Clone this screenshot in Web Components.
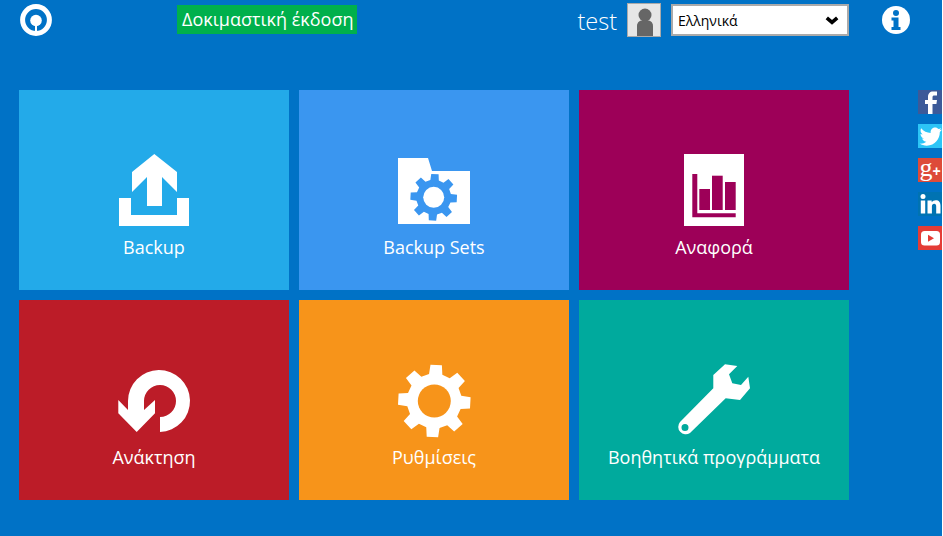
<!DOCTYPE html>
<html lang="el">
<head>
<meta charset="utf-8">
<title>Backup</title>
<style>
  html { background: #fff; }
  body { margin: 0; font-family: "Open Sans", "Liberation Sans", sans-serif; }
</style>
</head>
<body>
<app-shell>
  <app-header slot="header" user="test" badge="Δοκιμαστική έκδοση" language="Ελληνικά"></app-header>

  <tile-grid slot="tiles">
    <app-tile color="#23aae9">
      <svg slot="icon" viewBox="0 0 80 80" fill="#fff">
        <path d="M40.3 4 63 22V42L48 27V56H33V27L18 42V22Z"/>
        <path d="M5 48H17V65H63V48H75V76H5Z"/>
      </svg>
      Backup
    </app-tile>

    <app-tile color="#3a96f0">
      <cog-icon slot="icon" folder cx="39.7" cy="47.3" outer="23.5" root="17.5" hole="10.5" fill="#3a96f0" hole-fill="#fff"></cog-icon>
      Backup Sets
    </app-tile>

    <app-tile color="#9d0058">
      <svg slot="icon" viewBox="0 0 80 80">
        <rect x="10" y="4" width="60" height="72" fill="#fff"/>
        <path fill="#9d0058" d="M18.3 24H23.3V63.3H61.7V67.3H18.3Z"/>
        <rect x="25.3" y="39" width="10.7" height="21" fill="#9d0058"/>
        <rect x="38" y="25.7" width="10.7" height="34.3" fill="#9d0058"/>
        <rect x="51" y="32" width="10.7" height="28" fill="#9d0058"/>
      </svg>
      Αναφορά
    </app-tile>

    <app-tile color="#bc1c28">
      <svg slot="icon" viewBox="0 0 80 80" fill="#fff">
        <path d="M46 72A31 31 0 1 0 14 41V50L4.3 40V53.3L22.7 72 41 53.3V40L30 50V41A16 16 0 1 1 46 57Z"/>
      </svg>
      Ανάκτηση
    </app-tile>

    <app-tile color="#f7941a">
      <cog-icon slot="icon" cx="40.3" cy="41" outer="36.5" root="27.5" hole="16.5" fill="#fff" hole-fill="#f7941a"></cog-icon>
      Ρυθμίσεις
    </app-tile>

    <app-tile color="#00aa9d">
      <svg slot="icon" viewBox="0 0 80 80" fill="#fff">
        <path fill-rule="evenodd" d="M51 4.3 63.3 6 55 14.3 58.3 23.3 67 25 74.3 16.7 76 28.3 66 40 51.7 38.3 16 73A7.500 7.500 0 0 1 6 62L39.3 28.3V15ZM11 64A3.500 3.500 0 1 0 11 71 3.500 3.500 0 1 0 11 64Z"/>
      </svg>
      Βοηθητικά προγράμματα
    </app-tile>
  </tile-grid>

  <social-bar slot="social"></social-bar>
</app-shell>

<script>
class AppShell extends HTMLElement {
  constructor() {
    super();
    this.shadowDOM = this.attachShadow({ mode: "open" });
    this.shadowDOM.innerHTML = `
    <style>
      :host {
        display: block;
        width: 942px;
        height: 536px;
        overflow: hidden;
        background: #0072c6;
        color: #fff;
      }
      .content {
        display: flex;
        justify-content: space-between;
        padding-left: 19px;
      }
    </style>
    <slot name="header"></slot>
    <div class="content">
      <slot name="tiles"></slot>
      <slot name="social"></slot>
    </div>
    `;
  }
}

class AppHeader extends HTMLElement {
  constructor() {
    super();
    this.shadowDOM = this.attachShadow({ mode: "open" });
  }

  connectedCallback() {
    this.shadowDOM.innerHTML = `
    <style>
      :host {
        display: flex;
        align-items: flex-start;
        height: 90px;
        padding-left: 20px;
        box-sizing: border-box;
      }
      .logo { width: 32px; height: 32px; margin-top: 4px; }
      .badge {
        margin: 5px 0 0 125px;
        width: 180px;
        height: 29px;
        box-sizing: border-box;
        padding-left: 5px;
        background: #00b04c;
        font-size: 18px;
        line-height: 28px;
        white-space: nowrap;
      }
      .right {
        display: flex;
        align-items: flex-start;
        margin-left: auto;
        padding-right: 32px;
      }
      .user {
        margin-top: 4px;
        font-size: 23.5px;
        font-weight: 300;
        line-height: 34px;
      }
      .avatar {
        width: 34px;
        height: 34px;
        margin: 3px 10px 0 10px;
        box-sizing: border-box;
        border: 1px solid #aaa;
        background: #e6e6e6;
      }
      .avatar svg { display: block; width: 32px; height: 32px; }
      .language {
        display: flex;
        align-items: center;
        justify-content: space-between;
        width: 178px;
        height: 32px;
        margin-top: 4px;
        padding: 0 8px 0 5px;
        box-sizing: border-box;
        border: 2px solid #aaa;
        background: #fff;
        color: #000;
        font-size: 14px;
      }
      .language svg { width: 14px; height: 9px; }
      .info { width: 28px; height: 28px; margin: 6px 0 0 33px; }
    </style>
    <svg class="logo" viewBox="0 0 32 32">
      <circle cx="16" cy="16" r="13.4" fill="none" stroke="#fff" stroke-width="5"/>
      <circle cx="16" cy="16.5" r="5.8" fill="#fff"/>
      <rect x="15" y="18" width="2" height="10" fill="#fff"/>
    </svg>
    <div class="badge">${this.getAttribute("badge")}</div>
    <div class="right">
      <span class="user">${this.getAttribute("user")}</span>
      <div class="avatar">
        <svg viewBox="0 0 32 32" fill="#666">
          <circle cx="17" cy="11" r="6.5"/>
          <path d="M9 32V22C9 18 12 16 17 16S25 18 25 22V32Z"/>
        </svg>
      </div>
      <div class="language">
        <span>${this.getAttribute("language")}</span>
        <svg viewBox="0 0 14 9"><path d="M1.8 1.8 7 6.300 12.200 1.800" fill="none" stroke="#000" stroke-width="3.600"/></svg>
      </div>
      <svg class="info" viewBox="0 0 28 28">
        <circle cx="14" cy="14" r="14" fill="#fff"/>
        <circle cx="14" cy="7" r="3" fill="#0072c6"/>
        <path d="M9.500 11.500H16.500V21H18.500V24H9.500V21H11.500V14.500H9.500Z" fill="#0072c6"/>
      </svg>
    </div>
    `;
  }
}

class TileGrid extends HTMLElement {
  constructor() {
    super();
    this.shadowDOM = this.attachShadow({ mode: "open" });
    this.shadowDOM.innerHTML = `
    <style>
      :host {
        display: grid;
        grid-template-columns: repeat(3, 270px);
        grid-auto-rows: 200px;
        gap: 10px;
      }
    </style>
    <slot></slot>
    `;
  }
}

class AppTile extends HTMLElement {
  constructor() {
    super();
    this.shadowDOM = this.attachShadow({ mode: "open" });
  }

  connectedCallback() {
    this.shadowDOM.innerHTML = `
    <style>
      :host {
        display: flex;
        flex-direction: column;
        align-items: center;
        padding-top: 60px;
        box-sizing: border-box;
        background: ${this.getAttribute("color")};
        font-size: 18px;
        line-height: 24px;
        white-space: nowrap;
      }
      ::slotted([slot="icon"]) {
        display: block;
        width: 80px;
        height: 80px;
        margin-bottom: 5px;
      }
    </style>
    <slot name="icon"></slot>
    <slot></slot>
    `;
  }
}

// cog used by the settings tile, and on a folder by the backup sets tile
class CogIcon extends HTMLElement {
  constructor() {
    super();
    this.shadowDOM = this.attachShadow({ mode: "open" });
  }

  connectedCallback() {
    const cx = Number(this.getAttribute("cx"));
    const cy = Number(this.getAttribute("cy"));
    const outer = Number(this.getAttribute("outer"));
    const root = Number(this.getAttribute("root"));
    const point = (radius, degrees) => {
      const a = (degrees - 90) * Math.PI / 180;
      return `${(cx + radius * Math.cos(a)).toFixed(2)} ${(cy + radius * Math.sin(a)).toFixed(2)}`;
    };
    const points = [];
    for (let i = 0; i < 8; i++) {
      const mid = i * 45 + 3;
      points.push(point(root, mid - 14), point(outer, mid - 9), point(outer, mid + 9), point(root, mid + 14));
    }
    const folder = this.hasAttribute("folder")
      ? `<path fill="#fff" d="M4 8H34L38 21H76V74H4Z"/>`
      : "";
    this.shadowDOM.innerHTML = `
    <style>
      :host { display: block; }
      svg { display: block; width: 80px; height: 80px; }
    </style>
    <svg viewBox="0 0 80 80">
      ${folder}
      <path fill="${this.getAttribute("fill")}" d="M${points.join("L")}Z"/>
      <circle cx="${cx}" cy="${cy}" r="${this.getAttribute("hole")}" fill="${this.getAttribute("hole-fill")}"/>
    </svg>
    `;
  }
}

class SocialBar extends HTMLElement {
  constructor() {
    super();
    this.shadowDOM = this.attachShadow({ mode: "open" });
    this.shadowDOM.innerHTML = `
    <style>
      :host {
        display: flex;
        flex-direction: column;
        gap: 10px;
        width: 24px;
      }
      a {
        display: block;
        width: 24px;
        height: 24px;
        overflow: hidden;
      }
      svg { display: block; width: 24px; height: 24px; }
      .gplus {
        display: flex;
        align-items: baseline;
        justify-content: center;
        overflow: visible;
        background: #dd4b39;
        color: #fff;
        font-family: "Liberation Serif", serif;
        font-size: 26px;
        line-height: 20px;
      }
      .gplus small { font-size: 14px; font-family: "Liberation Sans", sans-serif; font-weight: 700; }
    </style>
    <a style="background:#3c5a99"><svg viewBox="0 0 24 24"><path fill="#fff" d="M10 24V14H7V10H10V7C10 3.500 12 1.500 15 1.500H19V5.500H16.500C15 5.500 14.500 6 14.500 7.500V10H19L18.400 14H14.500V24Z"/></svg></a>
    <a style="background:#2cc5f6"><svg viewBox="0 0 24 24"><path fill="#fff" d="M24 5.500C23 6 22.200 6.200 21.400 6.300 22.300 5.700 23 4.900 23.300 3.900 22.500 4.400 21.500 4.800 20.500 5 19.700 4.100 18.500 3.500 17.200 3.500 14.700 3.500 12.600 5.600 12.600 8.100 12.600 8.500 12.600 8.800 12.700 9.100 8.900 8.900 5.500 7.100 3.200 4.300 2.800 5 2.600 5.800 2.600 6.600 2.600 8.200 3.400 9.600 4.600 10.400 3.800 10.400 3.100 10.200 2.500 9.900V9.900C2.500 12.100 4.100 14 6.200 14.400 5.500 14.600 4.700 14.600 4.100 14.500 4.700 16.300 6.400 17.700 8.400 17.700 6.800 18.900 4.800 19.700 2.700 19.700 2.300 19.700 2 19.700 1.600 19.600 3.700 20.900 6.100 21.700 8.700 21.700 17.200 21.700 21.800 14.700 21.800 8.600V8C22.700 7.300 23.500 6.500 24 5.500Z"/></svg></a>
    <a class="gplus">g<small>+</small></a>
    <a style="background:#0073b2"><svg viewBox="0 0 24 24" fill="#fff"><circle cx="5" cy="4.500" r="2.500"/><rect x="2.800" y="8.500" width="4.400" height="13"/><path d="M9.500 8.500H13.700V10.300C14.500 9 16 8.200 17.700 8.200 21 8.200 22.500 10.200 22.500 13.800V21.500H18.200V14.500C18.200 12.700 17.500 11.800 16.200 11.800 14.800 11.800 13.900 12.800 13.900 14.500V21.500H9.500Z"/></svg></a>
    <a style="background:#e43c36"><svg viewBox="0 0 24 24"><rect x="3" y="5" width="19" height="14.500" rx="3.500" fill="#fff"/><path d="M10 8.800 16 12.300 10 15.800Z" fill="#e43c36"/></svg></a>
    `;
  }
}

customElements.define("cog-icon", CogIcon);
customElements.define("app-tile", AppTile);
customElements.define("tile-grid", TileGrid);
customElements.define("social-bar", SocialBar);
customElements.define("app-header", AppHeader);
customElements.define("app-shell", AppShell);
</script>
</body>
</html>
